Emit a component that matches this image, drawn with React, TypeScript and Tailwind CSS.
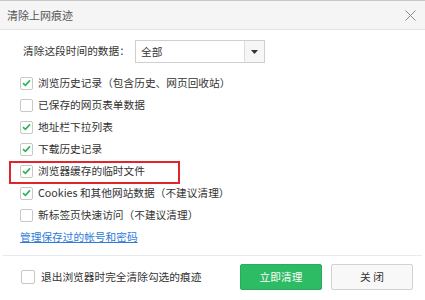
import React from "react";

type Item = { label: string; checked: boolean; latin?: boolean };

const items: Item[] = [
  { label: "浏览历史记录（包含历史、网页回收站）", checked: true },
  { label: "已保存的网页表单数据", checked: false },
  { label: "地址栏下拉列表", checked: true },
  { label: "下载历史记录", checked: true },
  { label: "浏览器缓存的临时文件", checked: true },
  { label: "Cookies 和其他网站数据（不建议清理）", checked: true },
  { label: "新标签页快速访问（不建议清理）", checked: false },
];

function Checkbox({ checked }: { checked: boolean }) {
  return (
    <span className="w-[13px] h-[13px] shrink-0 border border-[#c8c8c8] rounded-[2px] bg-white flex items-center justify-center">
      {checked && (
        <svg width="9" height="8" viewBox="0 0 9 8">
          <path d="M1 4.2 L3.4 6.4 L8 1.4" fill="none" stroke="#2cb35a" strokeWidth="1.6" />
        </svg>
      )}
    </span>
  );
}

export default function App() {
  return (
    <div
      className="w-[425px] h-[300px] bg-white text-[#333] text-[10.7px] overflow-hidden border-t border-[#c9c9c9]"
      style={{ fontFamily: '"Microsoft YaHei", "Noto Sans CJK SC", "Noto Sans", sans-serif' }}
    >
      {/* title bar */}
      <div className="h-[29px] bg-[#f5f5f5] border-b border-[#e4e4e4] flex items-center justify-between pl-[7px] pr-[9px]">
        <span className="text-[11px] text-[#555]">清除上网痕迹</span>
        <svg width="11" height="11" viewBox="0 0 11 11">
          <path d="M0.5 0.5 L10.5 10.5 M10.5 0.5 L0.5 10.5" stroke="#8a8a8a" strokeWidth="1" />
        </svg>
      </div>

      {/* time range */}
      <div className="flex items-center pl-[23px] mt-[10px] h-[23px]">
        <span className="w-[112px]">清除这段时间的数据：</span>
        <div className="w-[130px] h-[23px] border border-[#cfcfcf] flex">
          <span className="flex-1 pl-[5px] leading-[21px]">全部</span>
          <span className="w-[20px] border-l border-[#dcdcdc] bg-[#f6f6f6] flex items-center justify-center">
            <svg width="7" height="4" viewBox="0 0 7 4">
              <path d="M0 0 L7 0 L3.5 4 Z" fill="#333" />
            </svg>
          </span>
        </div>
      </div>

      {/* options */}
      <div className="mt-[9px] pl-[20px]">
        {items.map((it, i) => (
          <div key={i} className="relative h-[22px] flex items-center gap-[5px]">
            <Checkbox checked={it.checked} />
            <span>{it.label}</span>
            {i === 4 && (
              <span className="absolute left-[-11px] top-[1px] w-[171px] h-[23px] border-2 border-[#e0262b]" />
            )}
          </div>
        ))}
        <div className="h-[22px] flex items-center">
          <span className="text-[#2e7bd8] underline">管理保存过的帐号和密码</span>
        </div>
      </div>

      {/* divider */}
      <div className="mx-[3px] mt-[7px] border-t border-[#e6ebf2]" />

      {/* footer */}
      <div className="flex items-center pl-[21px] pr-[12px] mt-[8px]">
        <div className="flex items-center gap-[6px] flex-1">
          <span className="w-[14px] h-[14px] border border-[#c8c8c8] rounded-[2px] bg-white" />
          <span>退出浏览器时完全清除勾选的痕迹</span>
        </div>
        <button className="w-[82px] h-[26px] bg-[#2dbb64] text-white rounded-[2px] border border-[#27ad5b]">
          立即清理
        </button>
        <button className="ml-[9px] w-[82px] h-[26px] bg-[#f8f8f8] text-[#333] rounded-[2px] border border-[#d2d2d2]">
          关 闭
        </button>
      </div>
    </div>
  );
}
